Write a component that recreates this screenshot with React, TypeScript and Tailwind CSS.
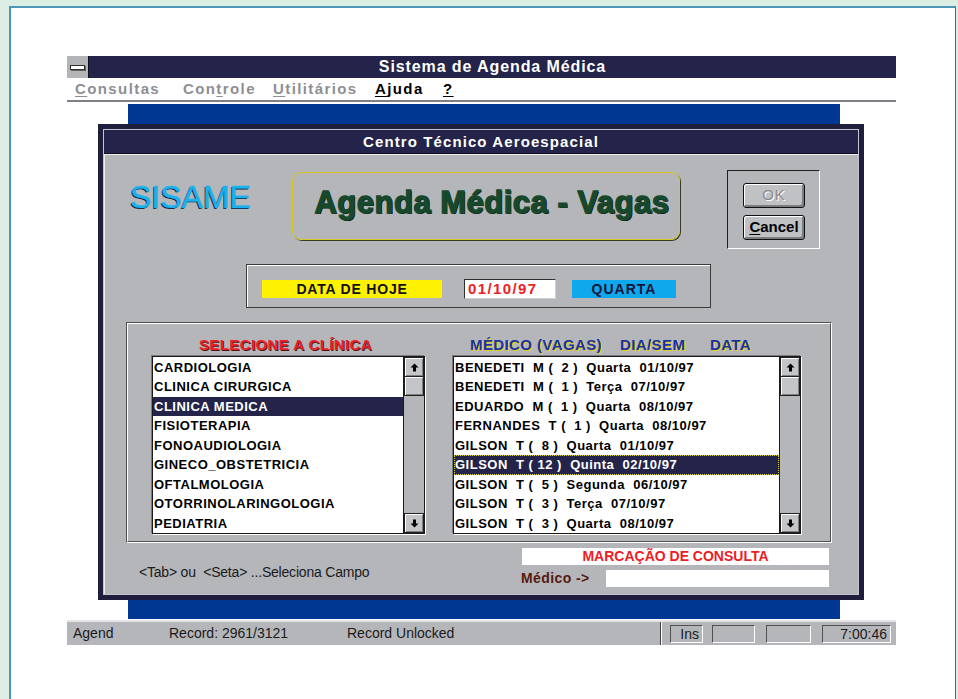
import React from 'react';

const clinicas = [
  'CARDIOLOGIA',
  'CLINICA CIRURGICA',
  'CLINICA MEDICA',
  'FISIOTERAPIA',
  'FONOAUDIOLOGIA',
  'GINECO_OBSTETRICIA',
  'OFTALMOLOGIA',
  'OTORRINOLARINGOLOGIA',
  'PEDIATRIA',
];

const vagas = [
  'BENEDETI  M (  2 )  Quarta  01/10/97',
  'BENEDETI  M (  1 )  Terça  07/10/97',
  'EDUARDO  M (  1 )  Quarta  08/10/97',
  'FERNANDES  T (  1 )  Quarta  08/10/97',
  'GILSON  T (  8 )  Quarta  01/10/97',
  'GILSON  T ( 12 )  Quinta  02/10/97',
  'GILSON  T (  5 )  Segunda  06/10/97',
  'GILSON  T (  3 )  Terça  07/10/97',
  'GILSON  T (  3 )  Quarta  08/10/97',
];

function Arrow({ down }: { down?: boolean }) {
  return (
    <svg width="9" height="9" viewBox="0 0 9 9" className={down ? 'rotate-180' : ''}>
      <polygon points="4.5,0.5 8.5,4.5 6,4.5 6,8.5 3,8.5 3,4.5 0.5,4.5" fill="#000" />
    </svg>
  );
}

function ScrollButton({ down }: { down?: boolean }) {
  return (
    <div className="h-[20px] bg-[#c4c5c9] border border-[#202020] flex items-center justify-center shadow-[inset_1px_1px_0_#ffffff,inset_-1px_-1px_0_#808080]">
      <Arrow down={down} />
    </div>
  );
}

function ListBox({
  items,
  selected,
  width,
  focus,
}: {
  items: string[];
  selected: number;
  width: string;
  focus?: boolean;
}) {
  return (
    <div className={`${width} h-[178px] flex bg-white border border-[#1a1a1a] shadow-[-1px_-1px_0_#7a7a7e,1px_1px_0_#ffffff]`}>
      <div className="flex-1 min-w-0 py-[0.5px]">
        {items.map((it, i) => (
          <div
            key={i}
            className={
              i === selected
                ? `h-[19.5px] leading-[18px] whitespace-pre text-white bg-[#24244a] ${focus ? 'border border-dotted border-[#e0d400]' : 'border border-transparent'}`
                : 'h-[19.5px] leading-[18px] whitespace-pre text-black border border-transparent'
            }
          >
            {it}
          </div>
        ))}
      </div>
      <div className="w-[21px] bg-[#b5b6ba] border-l border-[#1a1a1a] flex flex-col">
        <ScrollButton />
        <div className="h-[19px] bg-[#c4c5c9] border border-[#202020] border-t-0 shadow-[inset_1px_1px_0_#ffffff,inset_-1px_-1px_0_#808080]" />
        <div className="flex-1" />
        <ScrollButton down />
      </div>
    </div>
  );
}

function Dialog() {
  return (
    <div className="absolute left-[31px] top-[22px] w-[766px] h-[476px] bg-[#1f1f3d] p-[5px]">
      <div className="h-full border border-[#c4c4d0] flex flex-col">
        {/* caption */}
        <div className="h-[24px] bg-[#24244a] border-b border-[#0e0e20] text-white text-center font-bold text-[15px] tracking-[1.1px] leading-[23px]">
          Centro Técnico Aeroespacial
        </div>

        <div className="flex-1 bg-[#b5b6ba] border-l border-t border-[#ececec] flex flex-col">
          {/* heading row */}
          <div className="flex items-start mt-[15px]">
            <div className="ml-[25px] w-[162px] mt-[11px] text-[32px] leading-[32px] text-[#19b2ee] [-webkit-text-stroke:0.4px_#19b2ee] [text-shadow:-1px_1px_0_#0b1a2e]">
              SISAME
            </div>
            <div className="mt-[2px] w-[388px] h-[68px] rounded-[9px] border border-[#d8c820] shadow-[1px_1px_0_#3a3a20] flex items-center justify-center pl-[12px]">
              <span className="-mt-[6px] text-[31px] font-bold tracking-[0.5px] text-[#17482c] [-webkit-text-stroke:1.3px_#17482c] [text-shadow:1px_1px_0_#050c06]">
                Agenda Médica - Vagas
              </span>
            </div>
            <div className="ml-[47px] w-[93px] h-[79px] border border-t-[#202020] border-l-[#202020] border-b-white border-r-white pt-[12px] pl-[15px] flex flex-col gap-[7px]">
              <div className="w-[62px] h-[25px] rounded-[3px] border border-[#101010] bg-[#c0c1c5] shadow-[inset_1px_1px_0_#ffffff,inset_-2px_-2px_0_#7c7c80] flex items-center justify-center text-[15px] text-[#8a8a8e] tracking-[1px] [text-shadow:1px_1px_0_#ffffff]">
                OK
              </div>
              <div className="w-[62px] h-[25px] rounded-[3px] border border-[#101010] bg-[#c0c1c5] shadow-[inset_1px_1px_0_#ffffff,inset_-2px_-2px_0_#7c7c80] flex items-center justify-center text-[15px] font-bold text-black">
                <span>
                  <span className="underline underline-offset-2">C</span>ancel
                </span>
              </div>
            </div>
          </div>

          {/* today */}
          <div className="mt-[15px] ml-[141px] w-[465px] h-[44px] border border-[#3a3a3a] shadow-[inset_1px_1px_0_#ffffff] flex items-start pt-[15px]">
            <div className="ml-[15px] w-[180px] h-[18px] bg-[#fff200] text-center text-[14px] font-bold tracking-[0.8px] leading-[18px] text-[#101010]">
              DATA DE HOJE
            </div>
            <div className="ml-[22px] -mt-[1px] w-[92px] h-[20px] bg-white border border-t-[#303030] border-l-[#303030] border-b-[#d0d0d0] border-r-[#d0d0d0] pl-[3px] text-[15px] font-bold tracking-[1.4px] leading-[18px] text-[#ee1c24]">
              01/10/97
            </div>
            <div className="ml-[16px] w-[104px] h-[18px] bg-[#10a8ec] text-center text-[14px] font-bold tracking-[1px] leading-[18px] text-[#141438]">
              QUARTA
            </div>
          </div>

          {/* lists */}
          <div className="mt-[14px] ml-[21px] w-[706px] h-[221px] border border-t-[#505050] border-l-[#505050] border-b-white border-r-white">
            <div className="h-full border border-t-white border-l-white border-b-[#505050] border-r-[#505050] pt-[10px] pl-[24px] flex gap-[28px] text-[13px] font-bold tracking-[0.5px]">
              <div className="flex flex-col">
                <div className="h-[22px] leading-[22px] text-center pr-[6px] text-[15px] tracking-[0.4px] text-[#ee2028] [text-shadow:1px_1px_0_#4a1414]">
                  SELECIONE A CLÍNICA
                </div>
                <ListBox items={clinicas} selected={2} width="w-[273px]" />
              </div>
              <div className="flex flex-col">
                <div className="h-[22px] leading-[22px] flex pl-[17px] text-[15px] tracking-[0.4px] text-[#1a32a8] [text-shadow:1px_1px_0_#e8d400]">
                  <span className="w-[150px]">MÉDICO (VAGAS)</span>
                  <span className="w-[90px]">DIA/SEM</span>
                  <span>DATA</span>
                </div>
                <ListBox items={vagas} selected={5} width="w-[348px]" focus />
              </div>
            </div>
          </div>

          {/* footer */}
          <div className="mt-[5px] flex items-start">
            <div className="ml-[34px] w-[382px] pt-[16px] text-[14px] leading-[16px] tracking-[-0.2px] text-[#1a1a1a] whitespace-pre">
              {'<Tab> ou  <Seta> ...Seleciona Campo'}
            </div>
            <div className="w-[308px] flex flex-col">
              <div className="ml-[1px] h-[17px] bg-white text-center text-[14px] font-bold leading-[17px] text-[#ee1c24]">
                MARCAÇÃO DE CONSULTA
              </div>
              <div className="mt-[3px] flex items-center">
                <span className="text-[14px] font-bold tracking-[0.4px] text-[#561a10]">Médico -&gt;</span>
                <div className="ml-auto w-[223px] h-[17px] bg-white" />
              </div>
            </div>
          </div>
        </div>
      </div>
    </div>
  );
}

function StatusPanel({ w, children }: { w: string; children?: React.ReactNode }) {
  return (
    <div className={`${w} h-[18px] border border-t-[#505050] border-l-[#505050] border-b-white border-r-white text-[14px] leading-[16px] px-[3px] text-right text-[#1a1a1a]`}>
      {children}
    </div>
  );
}

export default function App() {
  return (
    <div className="w-[958px] h-[699px] overflow-hidden bg-[#dcede4] pl-[9px] pt-[6px] font-['Liberation_Sans',Arial,sans-serif]">
      <div className="w-[947px] h-full bg-white border-l-2 border-t-2 border-[#4a98b5] border-r border-r-[#2a78a0] pl-[56px] pt-[48px]">
        <div className="w-[829px] flex flex-col">
          {/* title bar */}
          <div className="h-[22px] flex bg-[#24244a]">
            <div className="w-[22px] h-full bg-[#b3b4b8] border-r border-[#101020] flex items-center justify-center">
              <div className="w-[15px] h-[5px] bg-white border border-[#303030] shadow-[1px_1px_0_#606060]" />
            </div>
            <div className="flex-1 text-center text-white font-bold text-[16px] tracking-[0.9px] leading-[22px]">
              Sistema de Agenda Médica
            </div>
          </div>

          {/* menu bar */}
          <div className="h-[24px] flex items-center pl-[8px] border-b-2 border-[#7e7e84] text-[15px] font-bold tracking-[1.4px] text-[#8e8e94]">
            <span className="w-[108px]">
              <span className="underline underline-offset-2">C</span>onsultas
            </span>
            <span className="w-[90px]">
              Con<span className="underline underline-offset-2">t</span>role
            </span>
            <span className="w-[102px]">
              <span className="underline underline-offset-2">U</span>tilitários
            </span>
            <span className="w-[68px] text-black">
              <span className="underline underline-offset-2">A</span>juda
            </span>
            <span className="text-black underline underline-offset-2">?</span>
          </div>

          {/* client area */}
          <div className="relative h-[518px] bg-white">
            <div className="mt-[2px] ml-[61px] w-[712px] h-[515px] bg-[#003792]" />
            <Dialog />
          </div>

          {/* status bar */}
          <div className="h-[25px] bg-[#b5b6ba] border-t-2 border-t-[#e4e4e6] flex items-center text-[14px] text-[#1a1a1a]">
            <span className="pl-[6px] w-[102px]">Agend</span>
            <span className="w-[178px]">Record: 2961/3121</span>
            <span className="flex-1">Record Unlocked</span>
            <div className="h-full w-[2px] border-l border-[#404040] bg-white" />
            <div className="ml-[8px]"><StatusPanel w="w-[33px]">Ins</StatusPanel></div>
            <div className="ml-[9px]"><StatusPanel w="w-[43px]" /></div>
            <div className="ml-[11px]"><StatusPanel w="w-[45px]" /></div>
            <div className="ml-[11px]"><StatusPanel w="w-[69px]">7:00:46</StatusPanel></div>
            <div className="w-[5px]" />
          </div>
        </div>
      </div>
    </div>
  );
}
